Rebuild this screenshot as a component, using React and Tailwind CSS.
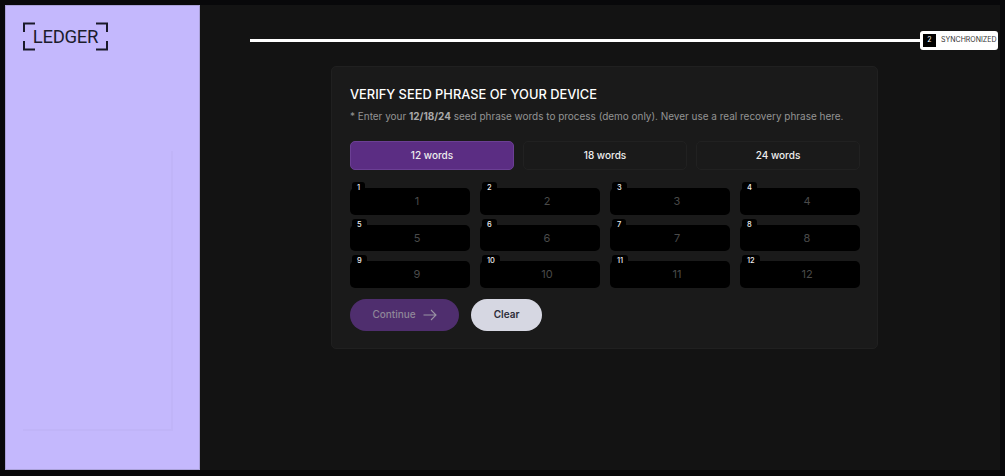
import React from 'react';

const words = [1, 2, 3, 4, 5, 6, 7, 8, 9, 10, 11, 12];

const LedgerLogo = () => (
  <div className="relative w-[85px] h-[29px] flex items-center justify-center">
    <svg className="absolute inset-0" width="85" height="29" viewBox="0 0 85 29" fill="none" stroke="#1a1a2a" strokeWidth="2">
      <path d="M1 10V1.5H12" />
      <path d="M73 1.5H84V10" />
      <path d="M1 19V27.5H12" />
      <path d="M73 27.5H84V19" />
    </svg>
    <span className="font-['Roboto',sans-serif] text-[18.5px] leading-none tracking-[-0.3px] text-[#1c1c2c] pt-[2px]">LEDGER</span>
  </div>
);

const WordInput = ({ n }) => (
  <div className="relative h-[26.5px] rounded-[5px] bg-black flex items-center justify-center pl-[14px]">
    <span className="absolute -top-[6px] left-[2px] h-[12px] px-[5px] rounded-[3px] bg-black text-[7.5px] font-medium leading-[12px] text-[#eee]">{n}</span>
    <span className="text-[11px] text-[#4a4a4a]">{n}</span>
  </div>
);

export default function App() {
  return (
    <div className="w-[1005px] h-[476px] bg-[#08080a] p-[5px] flex font-['Inter',sans-serif] antialiased overflow-hidden">
      {/* Sidebar */}
      <aside className="w-[195px] h-[465px] bg-[#c4b8fd] border border-[#a9a0d8] pt-[16px] pl-[17px] flex flex-col">
        <LedgerLogo />
        <div className="mt-[100px] w-[150px] h-[280px] border-r-2 border-b-2 border-[#c0b4f8]" />
      </aside>

      {/* Main */}
      <main className="flex-1 h-[465px] bg-[#131313] flex flex-col">
        <div className="pl-[50px] pr-[2px] pt-[26px] flex items-center">
          <div className="flex-1 h-[3px] bg-white" />
          <div className="w-[78px] h-[19px] rounded-[3px] bg-white flex items-center pl-[3px] gap-[5px]">
            <span className="w-[13px] h-[13px] bg-black text-white text-[7px] flex items-center justify-center">2</span>
            <span className="text-[7px] text-[#333] whitespace-nowrap">SYNCHRONIZED</span>
          </div>
        </div>

        {/* Card */}
        <section className="ml-[131px] mt-[16px] w-[547px] h-[283px] rounded-[5px] bg-[#1a1a1a] border border-[#202020] pt-[19px] pl-[18px] pr-[17px]">
          <h1 className="text-[12.85px] leading-[17px] font-medium text-white whitespace-nowrap">VERIFY SEED PHRASE OF YOUR DEVICE</h1>
          <p className="mt-[5px] text-[9.96px] leading-[16px] text-[#949494] whitespace-nowrap">
            * Enter your <b className="font-bold text-[#aaa]">12/18/24</b> seed phrase words to process (demo only). Never use a real recovery phrase here.
          </p>

          <div className="mt-[17px] grid grid-cols-3 gap-[9px]">
            <button className="h-[29px] rounded-[5px] bg-[#5b2d83] border border-[#6b3f94] text-[10px] font-medium text-[#eee]">12 words</button>
            <button className="h-[29px] rounded-[5px] bg-[#1a1a1a] border border-[#212121] text-[10px] font-medium text-[#eee]">18 words</button>
            <button className="h-[29px] rounded-[5px] bg-[#1a1a1a] border border-[#212121] text-[10px] font-medium text-[#eee]">24 words</button>
          </div>

          <div className="mt-[18px] grid grid-cols-4 gap-[10px]">
            {words.map((n) => (
              <WordInput key={n} n={n} />
            ))}
          </div>

          <div className="mt-[11px] flex gap-[12px]">
            <button className="w-[109px] h-[32px] rounded-full bg-[#4f2e6e] text-[10px] font-medium text-[#8f8799] flex items-center justify-center gap-[7px]">
              Continue
              <svg width="14" height="12" viewBox="0 0 14 12" fill="none" stroke="#9a93a3" strokeWidth="1.1">
                <path d="M0.5 6H13M8 1L13 6L8 11" />
              </svg>
            </button>
            <button className="w-[71px] h-[32px] rounded-full bg-[#d6d7e2] text-[10px] font-semibold text-[#2b2c38]">Clear</button>
          </div>
        </section>
      </main>
    </div>
  );
}
